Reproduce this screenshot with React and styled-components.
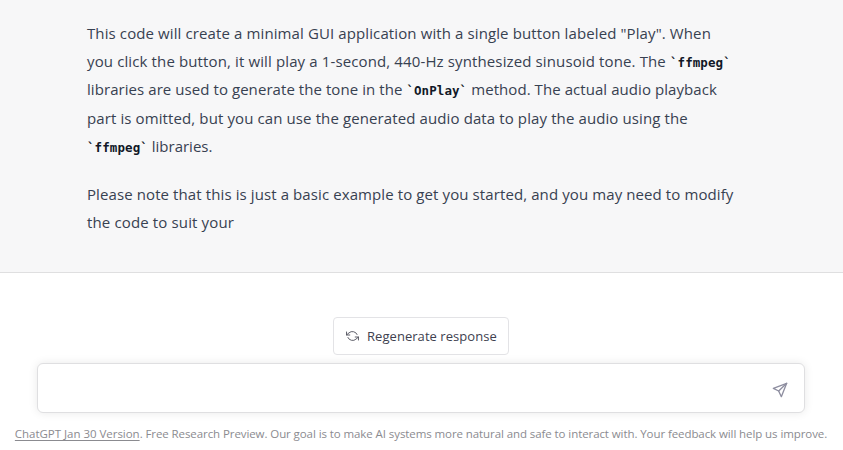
import React from "react";
import styled, { createGlobalStyle } from "styled-components";

const GlobalStyle = createGlobalStyle`
  * { box-sizing: border-box; }
  body { margin: 0; background: #fff; overflow: hidden; }
`;

const Page = styled.main`
  height: 450px;
  display: flex;
  flex-direction: column;
  font-family: "Open Sans", "Noto Sans", sans-serif;
  background: #fff;
`;

const Message = styled.section`
  height: 273px;
  padding: 19px 87px 0;
  background: #f7f7f8;
  border-bottom: 1px solid #dfdfe0;
  color: #374151;
`;

const Paragraph = styled.p`
  margin: 0 0 20px;
  font-size: 15px;
  line-height: 28.2px;
`;

const Line = styled.span`
  display: block;
  white-space: nowrap;
  letter-spacing: ${(p) => p.$track || 0}px;
`;

const Code = styled.code`
  font: 700 12.5px/1 "DejaVu Sans Mono", monospace;
  letter-spacing: 0.08px;
  color: #111827;
`;

const Composer = styled.footer`
  flex: 1;
  display: flex;
  flex-direction: column;
  align-items: center;
  padding: 44px 1px 0 0;
`;

const RegenerateButton = styled.button`
  width: 176px;
  height: 38px;
  display: flex;
  align-items: center;
  gap: 8px;
  padding: 0 12px;
  border: 1px solid #e3e3e6;
  border-radius: 4px;
  background: #fff;
  color: #40414f;
  font: 400 13px/20px "Open Sans", sans-serif;
  letter-spacing: 0.05px;
  white-space: nowrap;
`;

const InputBox = styled.div`
  width: 768px;
  height: 50px;
  margin-top: 8px;
  display: flex;
  align-items: center;
  justify-content: flex-end;
  padding: 3px 16px 0;
  border: 1px solid #dfdfe1;
  border-radius: 6px;
  background: #fff;
  box-shadow: 0 0 10px rgba(0, 0, 0, 0.09);
`;

const Note = styled.p`
  margin: 13px 0 0;
  font-size: 11.5px;
  line-height: 16px;
  letter-spacing: -0.085px;
  color: #8b8b90;
  white-space: nowrap;
`;

const VersionLink = styled.a`
  letter-spacing: -0.03px;
  text-decoration: underline;
  text-decoration-skip-ink: none;
  text-underline-offset: 2px;
`;

const Icon = styled.svg`
  flex: none;
  fill: none;
  stroke: currentColor;
  stroke-linecap: round;
  stroke-linejoin: round;
  color: ${(p) => p.$tone};
`;

const RefreshIcon = () => (
  <Icon $tone="#53545f" width="13" height="12" viewBox="0 0 24 24" preserveAspectRatio="none" strokeWidth="1.8">
    <polyline points="1 4 1 10 7 10" />
    <polyline points="23 20 23 14 17 14" />
    <path d="M20.49 9A9 9 0 0 0 5.64 5.64L1 10m22 4l-4.64 4.36A9 9 0 0 1 3.51 15" />
  </Icon>
);

const SendIcon = () => (
  <Icon $tone="#8e8ea0" width="16" height="16" viewBox="0 0 24 24" strokeWidth="2">
    <path d="M22 2 2 9.5l8 4L14 22 22 2Z" />
    <path d="M22 2 10 13.5" />
  </Icon>
);

export default function App() {
  return (
    <Page>
      <GlobalStyle />
      <Message>
        <Paragraph>
          <Line $track={0.11}>This code will create a minimal GUI application with a single button labeled "Play". When</Line>
          <Line $track={0.125}>you click the button, it will play a 1-second, 440-Hz synthesized sinusoid tone. The <Code>`ffmpeg`</Code></Line>
          <Line $track={0.065}>libraries are used to generate the tone in the <Code>`OnPlay`</Code> method. The actual audio playback</Line>
          <Line $track={0.11}>part is omitted, but you can use the generated audio data to play the audio using the</Line>
          <Line><Code>`ffmpeg`</Code> libraries.</Line>
        </Paragraph>
        <Paragraph>
          <Line $track={0.1}>Please note that this is just a basic example to get you started, and you may need to modify</Line>
          <Line $track={0.14}>the code to suit your</Line>
        </Paragraph>
      </Message>
      <Composer>
        <RegenerateButton><RefreshIcon />Regenerate response</RegenerateButton>
        <InputBox><SendIcon /></InputBox>
        <Note>
          <VersionLink>ChatGPT Jan 30 Version</VersionLink>. Free Research Preview. Our goal is to make AI systems more natural and safe to interact with. Your feedback will help us improve.
        </Note>
      </Composer>
    </Page>
  );
}
